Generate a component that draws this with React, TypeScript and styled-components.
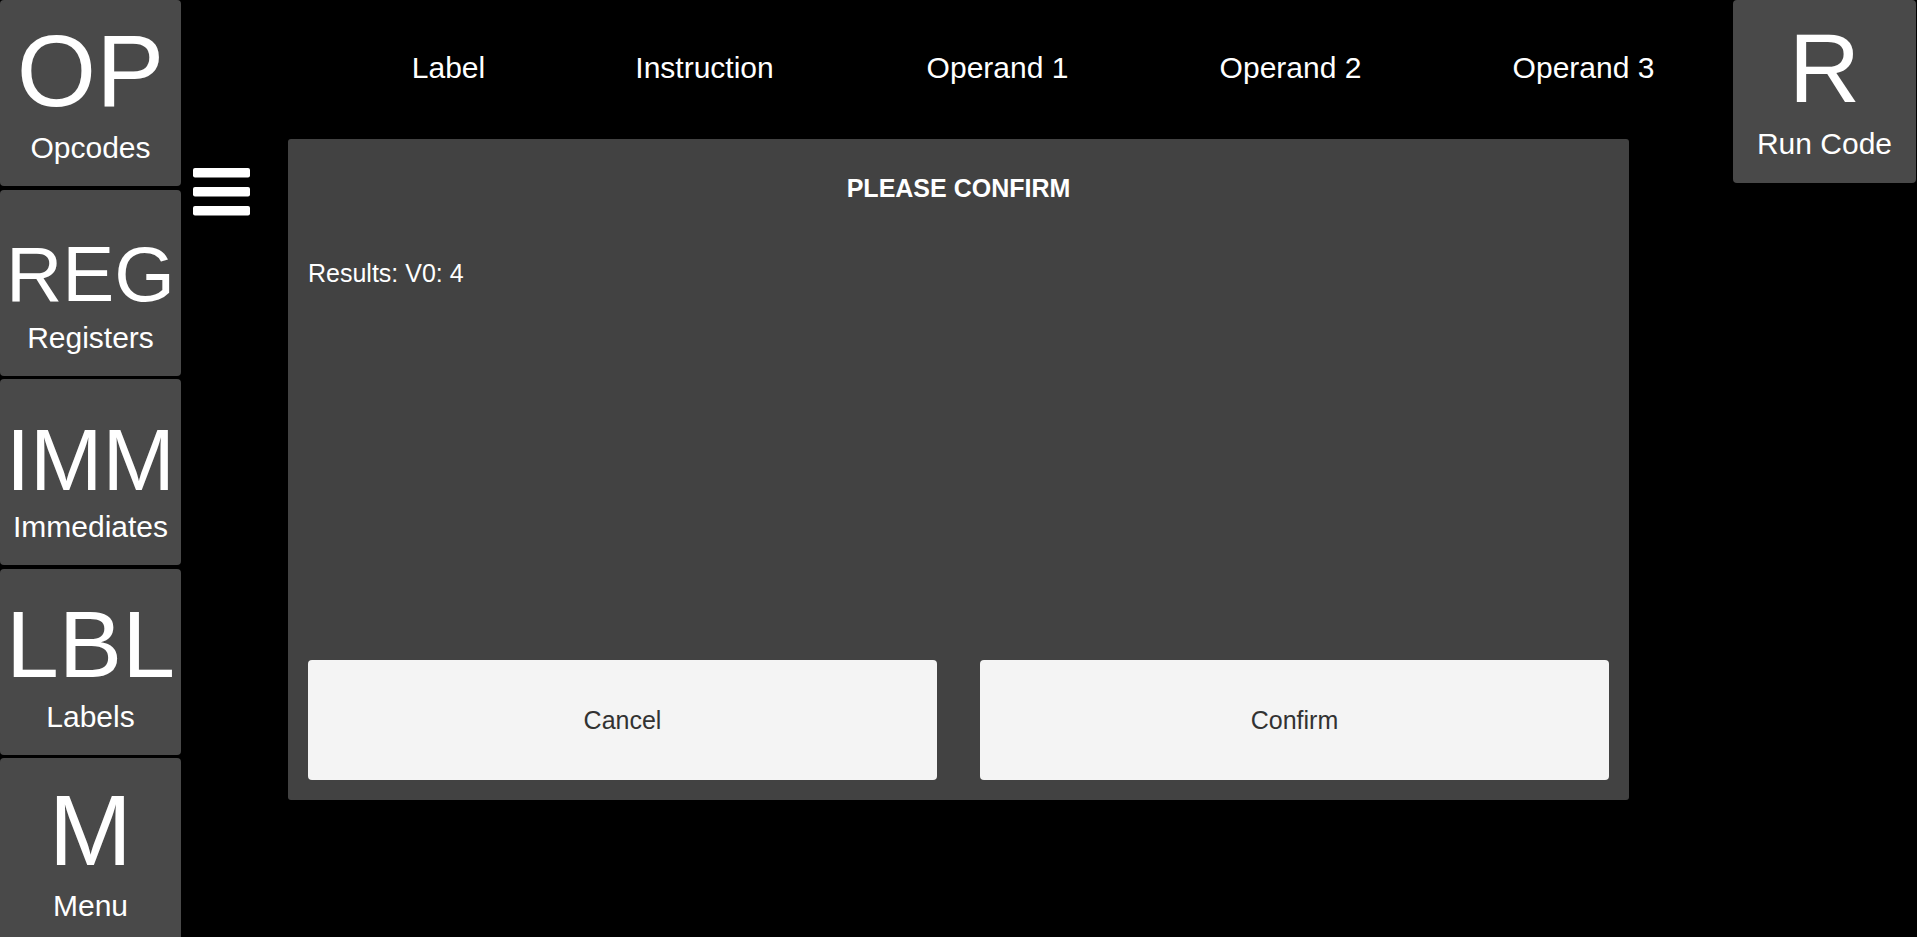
import React from "react";
import styled, { createGlobalStyle } from "styled-components";

const GlobalStyle = createGlobalStyle`
  html, body {
    margin: 0;
    padding: 0;
    background: #000;
    overflow: hidden;
  }
  body {
    font-family: "Liberation Sans", Arial, sans-serif;
  }
`;

// Layout
const Page = styled.div`
  display: flex;
  width: 1917px;
  height: 937px;
  overflow: hidden;
  background: #000;
  color: #fff;
`;

const Sidebar = styled.nav`
  display: flex;
  flex-direction: column;
  gap: 3.5px;
  width: 181px;
  flex-shrink: 0;
`;

const Middle = styled.main`
  display: flex;
  flex-direction: column;
  flex: 1;
`;

const RunColumn = styled.div`
  width: 183px;
  margin-right: 1px;
  flex-shrink: 0;
`;

// Tool buttons (sidebar + run code)
const ToolButton = styled.button<{ $h: number }>`
  display: flex;
  flex-direction: column;
  align-items: center;
  width: 100%;
  height: ${(p) => p.$h}px;
  flex-shrink: 0;
  padding: 0;
  border: none;
  border-radius: 4px;
  background: #494949;
  color: #fff;
  font-family: "Liberation Sans", Arial, sans-serif;
  cursor: pointer;
`;

const BigText = styled.div<{ $size: number; $h: number }>`
  display: flex;
  align-items: flex-end;
  justify-content: center;
  height: ${(p) => p.$h}px;
  font-size: ${(p) => p.$size}px;
  line-height: 1.117;
  white-space: nowrap;
`;

const ToolLabel = styled.div<{ $top: number }>`
  margin-top: ${(p) => p.$top}px;
  font-size: 30px;
  line-height: 1.117;
  white-space: nowrap;
`;

// Column headers
const HeaderRow = styled.div`
  display: grid;
  grid-template-columns: 219px repeat(4, 293px);
  height: 139px;
  box-sizing: border-box;
  padding: 51px 0 0 158px;
`;

const HeaderCell = styled.div`
  text-align: center;
  font-size: 30px;
  line-height: 1.117;
  white-space: nowrap;
`;

const Body = styled.div`
  display: flex;
`;

const MenuColumn = styled.div`
  width: 107px;
  box-sizing: border-box;
  padding: 29px 0 0 12px;
`;

// Dialog
const Dialog = styled.section`
  display: flex;
  flex-direction: column;
  width: 1341px;
  height: 661px;
  box-sizing: border-box;
  padding: 36px 20px 20px;
  border-radius: 3px;
  background: #424242;
`;

const DialogTitle = styled.h2`
  margin: 0;
  text-align: center;
  font-size: 25px;
  font-weight: 700;
  line-height: 1.117;
`;

const DialogText = styled.p`
  margin: 57px 0 0;
  font-size: 25px;
  line-height: 1.117;
`;

const DialogActions = styled.div`
  display: flex;
  gap: 43px;
  margin-top: auto;
`;

const ActionButton = styled.button`
  flex: 1;
  height: 120px;
  border: none;
  border-radius: 4px;
  background: #f4f4f4;
  color: #323232;
  font-family: "Liberation Sans", Arial, sans-serif;
  font-size: 25px;
  cursor: pointer;
`;

const HamburgerIcon = () => (
  <svg width="57" height="48" viewBox="0 0 57 48">
    <rect x="0" y="0" width="57" height="9.5" rx="2" fill="#fff" />
    <rect x="0" y="19" width="57" height="9.5" rx="2" fill="#fff" />
    <rect x="0" y="38" width="57" height="9.5" rx="2" fill="#fff" />
  </svg>
);

const tools = [
  { big: "OP", size: 102, label: "Opcodes" },
  { big: "REG", size: 78, label: "Registers" },
  { big: "IMM", size: 87, label: "Immediates" },
  { big: "LBL", size: 95, label: "Labels" },
  { big: "M", size: 100, label: "Menu" },
];

const headers = ["Label", "Instruction", "Operand 1", "Operand 2", "Operand 3"];

const App = () => {
  return (
    <>
      <GlobalStyle />
      <Page>
        <Sidebar>
          {tools.map((t) => (
            <ToolButton key={t.big} $h={186}>
              <BigText $size={t.size} $h={129}>
                {t.big}
              </BigText>
              <ToolLabel $top={2}>{t.label}</ToolLabel>
            </ToolButton>
          ))}
        </Sidebar>

        <Middle>
          <HeaderRow>
            {headers.map((h) => (
              <HeaderCell key={h}>{h}</HeaderCell>
            ))}
          </HeaderRow>
          <Body>
            <MenuColumn>
              <HamburgerIcon />
            </MenuColumn>
            <Dialog>
              <DialogTitle>PLEASE CONFIRM</DialogTitle>
              <DialogText>Results: V0: 4</DialogText>
              <DialogActions>
                <ActionButton>Cancel</ActionButton>
                <ActionButton>Confirm</ActionButton>
              </DialogActions>
            </Dialog>
          </Body>
        </Middle>

        <RunColumn>
          <ToolButton $h={183}>
            <BigText $size={99} $h={124}>
              R
            </BigText>
            <ToolLabel $top={3}>Run Code</ToolLabel>
          </ToolButton>
        </RunColumn>
      </Page>
    </>
  );
};

export default App;
